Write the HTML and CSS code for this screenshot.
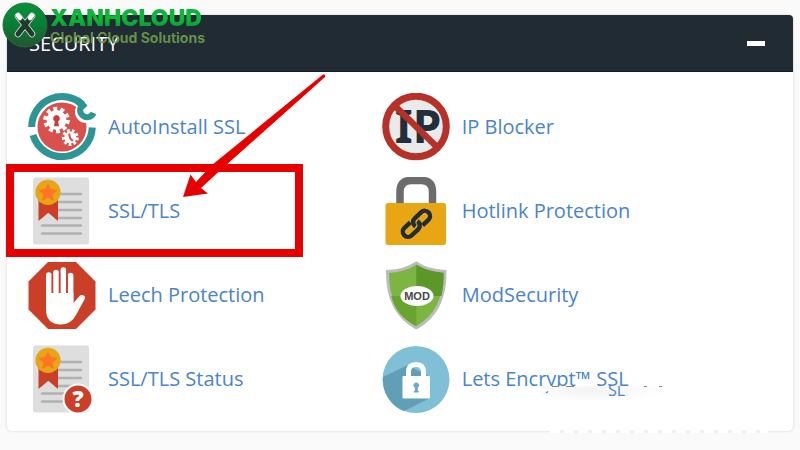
FILE: index.html
```html
<!DOCTYPE html>
<html lang="en">
<head>
  <meta charset="UTF-8">
  <meta name="viewport" content="width=device-width, initial-scale=1.0">
  <title>cPanel Security</title>
  <link rel="stylesheet" href="styles.css">
</head>
<body>
  <svg class="defs" width="0" height="0" aria-hidden="true">
    <symbol id="certificate" viewBox="0 0 68 68">
      <rect x="5" y="0.5" width="56" height="67" rx="2.5" fill="#dedede"/>
      <path d="M30 17h23M28 25h25M28 33h25M28 41h25M14 48.5h39M14 56.5h39" stroke="#b1b1b1" stroke-width="2.4" stroke-linecap="round"/>
      <path d="M10.5 20h19.5v24l-9.7-8.3-9.8 8.3z" fill="#cb3f29"/>
      <circle cx="20" cy="15.3" r="12.6" fill="#e7a614"/>
      <path d="M20 6l2.8 6.1 6.6.8-4.9 4.5 1.3 6.6-5.8-3.3-5.8 3.3 1.3-6.6-4.9-4.5 6.6-.8z" fill="#ff7426"/>
    </symbol>
  </svg>

  <section class="panel">
    <header class="panel-header">
      <h2>SECURITY</h2>
      <button class="collapse" type="button" aria-label="Collapse"><span></span></button>
    </header>
    <div class="items">
      <a class="item" href="#">
        <svg class="icon" viewBox="0 0 68 68">
          <circle cx="34" cy="34" r="24.5" fill="#d9504c"/>
          <path d="M3.7 34A30.3 30.3 0 0 1 56 13M64.3 34.5A30.3 30.3 0 0 1 5 42" fill="none" stroke="#2d9694" stroke-width="7"/>
          <circle cx="58" cy="19" r="11" fill="#fff"/>
          <path d="M49 7l8 8" stroke="#2d9694" stroke-width="7"/>
          <path d="M57 10.5A7 7 0 1 0 65.5 20" fill="none" stroke="#2d9694" stroke-width="6"/>
          <circle cx="28.5" cy="27" r="10" fill="#fff"/>
          <circle cx="28.5" cy="27" r="11.2" fill="none" stroke="#fff" stroke-width="4.2" stroke-dasharray="3.9 3.14"/>
          <path d="M28.5 22a3.4 3.4 0 0 1 1.7 6.3l.8 5h-5l.8-5a3.4 3.4 0 0 1 1.7-6.3z" fill="#c93c3c"/>
          <circle cx="42.3" cy="44.5" r="6" fill="#fff"/>
          <circle cx="42.3" cy="44.5" r="7" fill="none" stroke="#fff" stroke-width="3" stroke-dasharray="2.8 2.1"/>
          <path d="M41 40.5l1.3 5 2.5 2.5" stroke="#d9504c" stroke-width="2" fill="none"/>
        </svg>
        <span>AutoInstall SSL</span>
      </a>
      <a class="item" href="#">
        <svg class="icon" viewBox="0 0 68 68">
          <circle cx="34" cy="33.5" r="30" fill="#eaeaea"/>
          <text class="ip-text" x="36" y="50" text-anchor="middle">IP</text>
          <path d="M12 12l44 43" stroke="#b63127" stroke-width="6.5"/>
          <circle cx="34" cy="33.5" r="30.3" fill="none" stroke="#b63127" stroke-width="7"/>
        </svg>
        <span>IP Blocker</span>
      </a>
      <a class="item" href="#">
        <svg class="icon"><use href="#certificate"/></svg>
        <span>SSL/TLS</span>
        <i class="highlight"></i>
        <svg class="arrow" viewBox="0 0 144 124" aria-hidden="true">
          <path d="M141 .5Q144 0 143 3L43 92L19 114L26 119.5L1 123L8.5 100.5L14 108L30 91Z" fill="#e60000"/>
        </svg>
      </a>
      <a class="item" href="#">
        <svg class="icon" viewBox="0 0 68 68">
          <path d="M18 27V15Q18 3.5 29 3.5H39.5Q50.5 3.5 50.5 15V27" fill="none" stroke="#6c6c6c" stroke-width="7.5"/>
          <rect x="3.5" y="26" width="60.5" height="42" rx="2.5" fill="#e8a614"/>
          <g transform="rotate(-43 34.3 47)" fill="none" stroke="#202d39" stroke-width="4.4">
            <path d="M31 41.8H23a5.2 5.2 0 0 0 0 10.4H32a5.2 5.2 0 0 0 5-6.5"/>
            <path d="M38 52.2H46a5.2 5.2 0 0 0 0-10.4H37a5.2 5.2 0 0 0-5 6.5"/>
          </g>
        </svg>
        <span>Hotlink Protection</span>
      </a>
      <a class="item" href="#">
        <svg class="icon" viewBox="0 0 68 68">
          <path d="M20 1h28l19.5 19.5v28L48 68H20L.5 48.5v-28z" fill="#cb3f29"/>
          <path d="M20.8 14v25M28 11.5v25M35.3 9v27M42.6 14.5v27" stroke="#fff" stroke-width="5.6" stroke-linecap="round"/>
          <path d="M18 32H45.4V42L52 34.6Q54 33 56.5 35Q57.5 36 57 37.5L48 54Q43 63.5 33 63.5Q18 63.5 18 48Z" fill="#fff"/>
          <path d="M24.4 14v18M31.6 12v20M39 14v18" stroke="#cb3f29" stroke-width="1.4"/>
        </svg>
        <span>Leech Protection</span>
      </a>
      <a class="item" href="#">
        <svg class="icon" viewBox="0 0 68 68">
          <path d="M34.3 2C27 7 16 10 5.5 10.5Q5 51 34.3 67Q63.5 51 63 10.5C53 10 41 7 34.3 2Z" fill="#7db543" stroke="#bcbcbc" stroke-width="3"/>
          <path d="M34.3 3.5V35H59.5Q62 22 61.7 11.7C52 11 41 8 34.3 3.5Z" fill="#5b9829"/>
          <path d="M34.3 35H9.2Q14 55 34.3 65.2Z" fill="#68a52f"/>
          <ellipse cx="35" cy="35" rx="16.5" ry="10" fill="#fff"/>
          <text class="mod-text" x="35" y="39" text-anchor="middle">MOD</text>
        </svg>
        <span>ModSecurity</span>
      </a>
      <a class="item" href="#">
        <svg class="icon" viewBox="0 0 68 68">
          <use href="#certificate"/>
          <circle cx="50" cy="54" r="15.5" fill="#fff"/>
          <circle cx="50" cy="54" r="13.5" fill="#cb3f29"/>
          <text class="question-text" x="50" y="62" text-anchor="middle">?</text>
        </svg>
        <span>SSL/TLS Status</span>
      </a>
      <a class="item" href="#">
        <svg class="icon" viewBox="0 0 68 68">
          <circle cx="34" cy="34.5" r="33.5" fill="#7fc0d6"/>
          <path d="M26 20L1 32Q0 49 13 61Q18 65 22 66L48 53V32Z" fill="#609fb5"/>
          <path d="M26.5 33V27Q26.5 19.5 34 19.5Q41.5 19.5 41.5 27V33" fill="none" stroke="#fff" stroke-width="5"/>
          <rect x="20.5" y="31" width="27.5" height="22.5" rx="1" fill="#fff"/>
          <path d="M34.3 37.5a2.8 2.8 0 0 1 1.5 5.2v3.3h1v1.5h-5V46h1v-3.3a2.8 2.8 0 0 1 1.5-5.2z" fill="#68adc5"/>
        </svg>
        <span>Lets Encrypt™ SSL</span>
        <i class="smudge"></i>
        <svg class="marks" viewBox="0 0 130 14" aria-hidden="true">
          <path d="M11 .5h7M25 .5h8M103 .5h3M118 .5h3" stroke="#888"/>
          <path d="M5 7l2-1.5" stroke="#4c87cf" stroke-width="1.5"/>
          <text class="fragment" x="67" y="10">SL</text>
        </svg>
      </a>
    </div>
    <i class="edge-fade"></i>
  </section>

  <div class="brand">
    <svg class="brand-logo" viewBox="0 0 46 46" aria-hidden="true">
      <defs>
        <linearGradient id="badge" x1="0" y1="0" x2="0" y2="1">
          <stop offset="0" stop-color="#07913b"/>
          <stop offset="0.5" stop-color="#087e35"/>
          <stop offset="1" stop-color="#24542f"/>
        </linearGradient>
      </defs>
      <circle cx="23" cy="23" r="22" fill="url(#badge)" stroke="#236b36"/>
      <g fill="none" stroke-linecap="round">
        <path d="M16 14L30 32M30 14L16 32" stroke="#dce9df" stroke-width="6.5"/>
        <path d="M16 14L30 32M30 14L16 32" stroke="#203b2c" stroke-width="5"/>
        <path d="M16 13.5l2 2.5M30 13.5l-2 2.5" stroke="#fff" stroke-width="4.5"/>
      </g>
    </svg>
    <div class="brand-text">
      <strong>XANHCLOUD</strong>
      <span>Global Cloud Solutions</span>
    </div>
  </div>
</body>
</html>
```
FILE: styles.css
```css
* {
  box-sizing: border-box;
}
body {
  margin: 0;
  padding: 15px 7px 19px;
  background-color: #fafafa;
  font-family: "Open Sans", "Noto Sans", sans-serif;
}
.defs {
  position: absolute;
}
.panel {
  position: relative;
  background: #fff;
  border-radius: 5px;
  box-shadow: 0 0 2px 1px #e6e6e6;
}
.panel-header {
  display: flex;
  align-items: center;
  justify-content: space-between;
  height: 57px;
  padding: 0 28px 0 22px;
  background-color: #212b34;
  border-bottom: 1px solid #151d24;
  border-radius: 4px 4px 0 0;
}
.panel-header h2 {
  margin: 0;
  color: #fff;
  font-size: 20px;
  font-weight: 400;
}
.collapse {
  padding: 8px 0;
  border: none;
  background: none;
  cursor: pointer;
}
.collapse span {
  display: block;
  width: 18px;
  height: 5px;
  background-color: #fff;
}
.items {
  display: grid;
  grid-template-columns: 45% 55%;
  row-gap: 16px;
  padding: 21px 0 18px;
}
.item {
  position: relative;
  display: flex;
  align-items: center;
  gap: 12px;
  padding-left: 21px;
  color: #4a84cb;
  font-size: 20px;
  line-height: 26px;
  text-decoration: none;
}
.icon {
  flex: none;
  width: 68px;
  height: 68px;
}
.ip-text {
  fill: #222e39;
  font: 700 46px "Noto Sans", sans-serif;
}
.mod-text {
  fill: #484848;
  font: 700 11px "Liberation Sans", sans-serif;
}
.question-text {
  fill: #fff;
  font: 800 22px "Open Sans", sans-serif;
}

/* callout around SSL/TLS */
.highlight {
  position: absolute;
  top: -13px;
  left: -1px;
  width: 297px;
  height: 93px;
  border: 8px solid #e60000;
}
.arrow {
  position: absolute;
  z-index: 1;
  top: -103px;
  left: 175px;
  width: 144px;
  height: 124px;
}

/* retouched area under the last item */
.smudge {
  position: absolute;
  top: 41px;
  left: 180px;
  width: 130px;
  height: 16px;
  background: radial-gradient(ellipse at 40% 30%, #f3f3f3, #fff 70%);
}
.marks {
  position: absolute;
  top: 41px;
  left: 180px;
  width: 130px;
  height: 14px;
  overflow: hidden;
}
.fragment {
  fill: #4a84cb;
  font: 400 16px "Open Sans", sans-serif;
}
.edge-fade {
  position: absolute;
  right: 25px;
  bottom: -2px;
  width: 218px;
  height: 3px;
  background: repeating-linear-gradient(90deg, #fff 0 10px, #f1f1f1 10px 14px);
}

.brand {
  position: absolute;
  top: 2px;
  left: 2px;
  display: flex;
  gap: 2px;
}
.brand-logo {
  width: 46px;
  height: 46px;
}
.brand-text {
  display: flex;
  flex-direction: column;
  padding-top: 5px;
}
.brand-text strong {
  background: linear-gradient(#12ad3c, #08bd35 50%, #128b38);
  background-clip: text;
  -webkit-background-clip: text;
  color: transparent;
  font: 900 23px/23px Inter, sans-serif;
}
.brand-text span {
  color: rgba(112, 164, 76, 0.85);
  font: 700 14px/16px Inter, sans-serif;
}
```
